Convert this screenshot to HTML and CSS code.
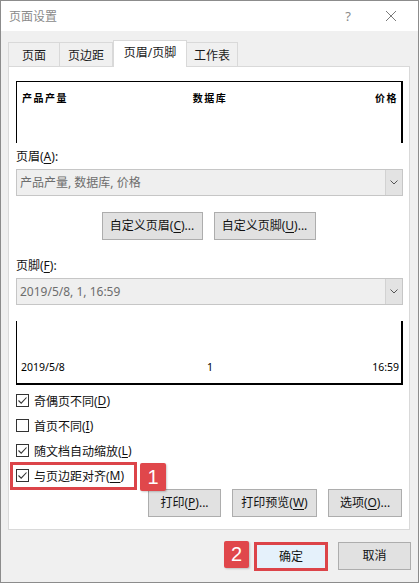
FILE: index.html
```html
<!DOCTYPE html>
<html lang="zh-CN">
<head>
<meta charset="utf-8">
<title>页面设置</title>
<link rel="stylesheet" href="styles.css">
</head>
<body>
<div class="window">
  <div class="titlebar">
    <span class="title">页面设置</span>
    <span class="help">?</span>
    <span class="close"><svg width="12" height="12" viewBox="0 0 12 12"><path d="M1 1L11 11M11 1L1 11" stroke="#7a7a7a" stroke-width="1" fill="none"/></svg></span>
  </div>
  <div class="tabs">
    <div class="tab t1">页面</div>
    <div class="tab t2">页边距</div>
    <div class="tab t3 active">页眉/页脚</div>
    <div class="tab t4">工作表</div>
  </div>
  <div class="panel">
    <div class="preview head">
      <span class="pl">产品产量</span><span class="pc">数据库</span><span class="pr">价格</span>
    </div>
    <div class="field-label">页眉(<u>A</u>):</div>
    <div class="combo">
      <span class="combo-text">产品产量, 数据库, 价格</span>
      <span class="drop"><svg width="8" height="5" viewBox="0 0 8 5"><path d="M0.5 0.5L4 4L7.5 0.5" stroke="#555" stroke-width="1" fill="none"/></svg></span>
    </div>
    <div class="btnrow center">
      <button class="btn w101">自定义页眉(<u>C</u>)...</button>
      <button class="btn w102">自定义页脚(<u>U</u>)...</button>
    </div>
    <div class="field-label label2">页脚(<u>F</u>):</div>
    <div class="combo">
      <span class="combo-text">2019/5/8, 1, 16:59</span>
      <span class="drop"><svg width="8" height="5" viewBox="0 0 8 5"><path d="M0.5 0.5L4 4L7.5 0.5" stroke="#555" stroke-width="1" fill="none"/></svg></span>
    </div>
    <div class="preview foot">
      <span class="pl">2019/5/8</span><span class="pc">1</span><span class="pr">16:59</span>
    </div>
    <div class="checks">
      <div class="check"><span class="box"><svg width="11" height="11" viewBox="0 0 11 11"><path d="M1.5 5.5L4.2 8.2L9.5 2.5" stroke="#333" stroke-width="1.1" fill="none"/></svg></span>奇偶页不同(<u>D</u>)</div>
      <div class="check"><span class="box"></span>首页不同(<u>I</u>)</div>
      <div class="check"><span class="box"><svg width="11" height="11" viewBox="0 0 11 11"><path d="M1.5 5.5L4.2 8.2L9.5 2.5" stroke="#333" stroke-width="1.1" fill="none"/></svg></span>随文档自动缩放(<u>L</u>)</div>
      <div class="check marked"><span class="box"><svg width="11" height="11" viewBox="0 0 11 11"><path d="M1.5 5.5L4.2 8.2L9.5 2.5" stroke="#333" stroke-width="1.1" fill="none"/></svg></span>与页边距对齐(<u>M</u>)
        <span class="redframe"></span>
        <span class="badge b1">1</span>
      </div>
    </div>
    <div class="btnrow right">
      <button class="btn w73">打印(<u>P</u>)...</button>
      <button class="btn w85">打印预览(<u>W</u>)</button>
      <button class="btn w74">选项(<u>O</u>)...</button>
    </div>
  </div>
  <div class="footer">
    <span class="badge b2">2</span>
    <button class="btn ok">确定</button>
    <button class="btn cancel">取消</button>
  </div>
</div>
</body>
</html>
```

FILE: styles.css
```css
* { box-sizing: border-box; }
html, body { margin: 0; padding: 0; background: #ffffff; }
body {
  font-family: "Noto Sans", "Noto Sans CJK SC", sans-serif;
  font-size: 12px;
  color: #111;
}
.window {
  width: 419px;
  height: 583px;
  border: 1px solid #8c8c8c;
  background: #f0f0f0;
  display: flex;
  flex-direction: column;
}
.titlebar {
  height: 30px;
  background: #ffffff;
  display: flex;
  align-items: center;
  padding-left: 8px;
  flex: none;
}
.title {
  font-size: 12px;
  color: #8a8a8a;
  flex: 1;
}
.help {
  font-size: 13px;
  color: #8a8a8a;
  width: 14px;
  margin-right: 30px;
  text-align: center;
}
.close {
  width: 12px;
  height: 12px;
  margin-right: 21px;
  display: flex;
}
.tabs {
  display: flex;
  align-items: flex-end;
  padding-left: 7px;
  margin-top: 9px;
  margin-bottom: -1px;
  height: 27px;
  position: relative;
  z-index: 1;
  flex: none;
}
.tab {
  height: 24px;
  margin-bottom: 1px;
  border: 1px solid #d9d9d9;
  border-bottom: none;
  background: #f0f0f0;
  display: flex;
  align-items: center;
  justify-content: center;
  font-size: 12px;
  color: #1a1a1a;
  line-height: 1;
  padding-top: 2px;
}
.tab + .tab { border-left: none; }
.t1 { width: 52px; }
.t2 { width: 53px; }
.t3 { width: 74px; }
.t4 { width: 51px; }
.tab.active {
  height: 27px;
  margin-bottom: 0;
  background: #ffffff;
  border-left: 1px solid #d9d9d9;
  padding-top: 0;
  padding-bottom: 2px;
}
.tab.t4 { border-left: none; }
.panel {
  margin: 0 8px 0 7px;
  background: #ffffff;
  border: 1px solid #d9d9d9;
  padding: 14px 6px 12px 7px;
  flex: none;
}
.preview {
  display: grid;
  grid-template-columns: 1fr auto 1fr;
  border-left: 1px solid #000;
  border-right: 2px solid #000;
  padding: 0 3px 0 5px;
  color: #000;
}
.pl { justify-self: start; }
.pc { justify-self: center; }
.pr { justify-self: end; }
.preview.head {
  height: 62px;
  border-top: 1px solid #000;
  padding-top: 9px;
  font-size: 10px;
  font-weight: bold;
  font-family: "Noto Sans CJK SC", sans-serif;
  letter-spacing: 1.5px;
  line-height: 14px;
  align-items: start;
}
.preview.foot {
  height: 64px;
  margin-top: 16px;
  border-bottom: 2px solid #000;
  font-size: 10.5px;
  line-height: 14px;
  align-items: end;
  padding-bottom: 9px;
  padding-left: 4px;
  padding-right: 2px;
}
.field-label {
  margin-top: 6px;
  height: 16px;
  line-height: 16px;
  font-size: 12px;
  color: #111;
}
.field-label.label2 { margin-top: 18px; }
u { text-decoration-thickness: 1px; text-underline-offset: 2px; }
.combo {
  margin-top: 4px;
  height: 27px;
  width: 387px;
  border: 1px solid #c6c6c6;
  background: #efefef;
  display: flex;
  align-items: center;
}
.combo-text {
  flex: 1;
  padding-left: 3px;
  color: #6d6d6d;
  font-size: 12px;
  line-height: 16px;
}
.drop {
  width: 17px;
  height: 100%;
  background: #e3e3e3;
  border-left: 1px solid #d2d2d2;
  display: flex;
  align-items: center;
  justify-content: center;
}
.btnrow {
  display: flex;
  gap: 11px;
}
.btnrow.center {
  justify-content: center;
  margin-top: 16px;
  padding-right: 2px;
}
.btnrow.right {
  justify-content: flex-end;
  margin-top: 1px;
  padding-right: 1px;
}
.btn {
  height: 28px;
  background: #e1e1e1;
  border: 1px solid #adadad;
  font-family: "Noto Sans", "Noto Sans CJK SC", sans-serif;
  font-size: 12px;
  color: #111;
  padding: 0;
  line-height: 16px;
}
.w101 { width: 101px; }
.w102 { width: 102px; }
.w73 { width: 73px; }
.w85 { width: 85px; }
.w74 { width: 74px; }
.checks {
  margin-top: 3px;
  display: flex;
  flex-direction: column;
}
.check {
  height: 25px;
  display: flex;
  align-items: center;
  font-size: 12px;
  color: #111;
  position: relative;
}
.box {
  width: 13px;
  height: 13px;
  border: 1px solid #333;
  background: #fff;
  margin-right: 5px;
  display: flex;
  align-items: center;
  justify-content: center;
  flex: none;
}
.redframe {
  position: absolute;
  left: -6px;
  top: -1px;
  width: 127px;
  height: 28px;
  border: 3px solid #dc4449;
}
.badge {
  background: #e0474b;
  color: #fff;
  font-family: "Liberation Sans", sans-serif;
  font-size: 20px;
  display: flex;
  align-items: center;
  justify-content: center;
  border-radius: 2px;
  box-shadow: 1px 1px 2px rgba(0,0,0,0.2);
}
.b1 {
  position: absolute;
  left: 124px;
  top: 0;
  width: 26px;
  height: 28px;
}
.footer {
  display: flex;
  justify-content: flex-end;
  align-items: flex-start;
  padding-top: 12px;
  padding-right: 7px;
}
.b2 {
  width: 25px;
  height: 27px;
  margin-right: 5px;
  margin-top: -1px;
}
.btn.ok {
  width: 74px;
  height: 29px;
  border: 3px solid #dc4449;
  background: #e5f1fb;
  margin-right: 10px;
}
.btn.cancel {
  width: 73px;
  height: 28px;
}
```
